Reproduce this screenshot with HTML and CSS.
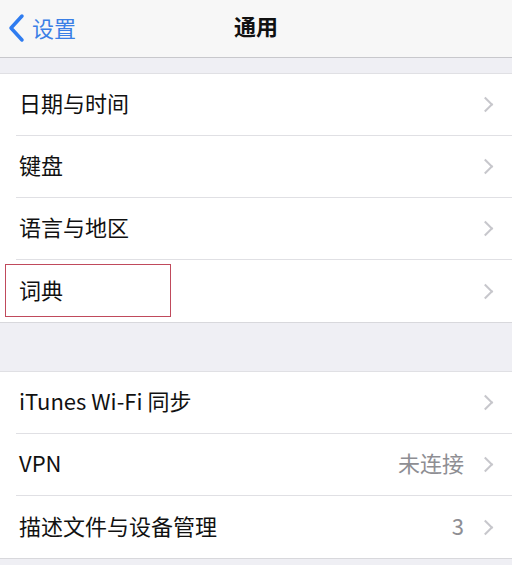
FILE: index.html
```html
<!DOCTYPE html>
<html>
	<head>
		<title>通用</title>
		<meta charset="utf-8">
		<link rel="stylesheet" href="styles.css">
	</head>
	<body>
		<div class="navbar">
			<a class="back">
				<svg width="20" height="30" viewBox="0 0 20 30"><path d="M15 3 L4 15 L15 27" fill="none" stroke="#2f7cf0" stroke-width="3.5" stroke-linecap="round" stroke-linejoin="round"/></svg>
				<span>设置</span>
			</a>
			<div class="title">通用</div>
		</div>
		<div class="gap top"></div>
		<div class="group">
			<div class="row"><span class="label">日期与时间</span><span class="chev"></span></div>
			<div class="row"><span class="label">键盘</span><span class="chev"></span></div>
			<div class="row"><span class="label">语言与地区</span><span class="chev"></span></div>
			<div class="row last"><span class="label">词典</span><span class="chev"></span><div class="mark"></div></div>
		</div>
		<div class="gap mid"></div>
		<div class="group">
			<div class="row"><span class="label">iTunes Wi-Fi 同步</span><span class="chev"></span></div>
			<div class="row"><span class="label">VPN</span><span class="detail">未连接</span><span class="chev"></span></div>
			<div class="row last"><span class="label">描述文件与设备管理</span><span class="detail">3</span><span class="chev"></span></div>
		</div>
		<div class="gap"></div>
	</body>
</html>
```
FILE: styles.css
```css
body{
	margin:0;
	background-color:#efeff4;
	font-family:"Noto Sans CJK SC","Noto Sans",sans-serif;
	color:#111;
}
.navbar{
	height:58px;
	padding-bottom:7px;
	box-sizing:border-box;
	background-color:#f7f7f7;
	border-bottom:1px solid #c8c8cc;
	display:flex;
	align-items:center;
	justify-content:center;
	position:relative;
}
.back{
	position:absolute;
	left:7px;
	top:10px;
	display:flex;
	align-items:center;
	color:#3b7fe6;
	font-size:22px;
}
.back svg{
	margin-right:5px;
	margin-top:3px;
}
.title{
	font-size:22px;
	font-weight:bold;
	color:#111;
}
.gap.top{height:15px;}
.gap.mid{height:48px;}
.gap{height:10px;}
.group{
	background-color:#fff;
	border-top:1px solid #e0e0e4;
	border-bottom:1px solid #d8d8dc;
}
.row{
	height:62px;
	box-sizing:border-box;
	padding-bottom:5px;
	margin-left:16px;
	padding-right:18px;
	display:flex;
	align-items:center;
	border-bottom:1px solid #e0e0e4;
	position:relative;
}
.row.last{
	border-bottom:none;
}
.label{
	flex:1;
	padding-left:3px;
	font-size:22px;
}
.detail{
	color:#8e8e93;
	font-size:22px;
	margin-right:16px;
}
.chev{
	width:9px;
	height:9px;
	margin-top:5px;
	border-top:2px solid #c7c7cc;
	border-right:2px solid #c7c7cc;
	transform:rotate(45deg);
	margin-right:3px;
}
.mark{
	position:absolute;
	left:-11px;
	top:4px;
	width:164px;
	height:51px;
	border:1px solid #c04a5c;
}
```
